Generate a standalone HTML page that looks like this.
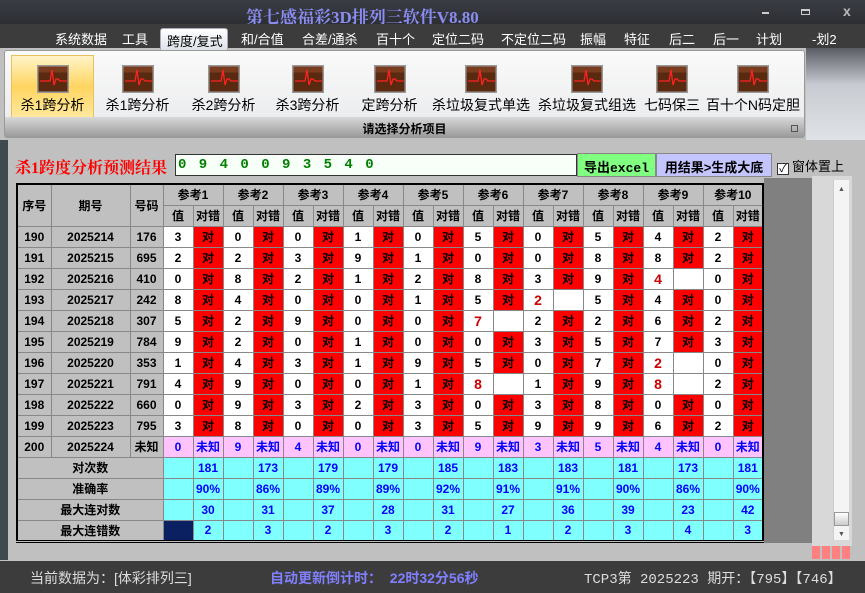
<!DOCTYPE html><html><head><meta charset="utf-8"><style>
*{margin:0;padding:0;box-sizing:border-box}
body{width:865px;height:593px;overflow:hidden;background:#c0c0c0;font-family:"Liberation Sans","Noto Sans CJK SC",sans-serif;position:relative}
.a{position:absolute}
#title{left:0;top:0;width:865px;height:24px;background:linear-gradient(#3a3d44,#2c2e33)}
#title span{position:absolute;left:246px;top:3px;color:#8a8cf0;font:bold 17px "Liberation Serif","Noto Serif CJK SC",serif}
#menu{left:0;top:24px;width:865px;height:24px;background:#3c3c3c;color:#fff;font-size:13px}
#menu span{position:absolute;top:5px}
#tab{left:160px;top:28px;width:68px;height:22px;background:linear-gradient(#fff,#dde2ea);border:1px solid #aab;border-bottom:none;border-radius:3px 3px 0 0;color:#000;font-size:13px;padding:2px 0 0 6px}
#rib{left:4px;top:50px;width:801px;height:88px;background:linear-gradient(#fafafa,#e8e9eb);border:1px solid #999;border-radius:3px}
#ribr{left:806px;top:48px;width:59px;height:92px;background:linear-gradient(#5a5d63,#c8ccd2 40%,#dfe2e6)}
#ribb{left:5px;top:117px;width:799px;height:20px;background:linear-gradient(#d8d8d8,#9a9a9a);text-align:center;font:bold 12px "Liberation Sans","Noto Sans CJK SC",sans-serif;padding-top:3px}
.btn{position:absolute;top:55px;height:62px;text-align:center;font-size:14px}
.btn svg{display:block;margin:10px auto 2px}
#sel{left:11px;top:55px;width:83px;height:64px;background:linear-gradient(#fff3c8,#ffd560 50%,#ffe9a0);border:1px solid #e8c060}
#main{left:8px;top:143px;width:857px;height:418px;background:#c0c0c0}
#ls{left:0;top:140px;width:8px;height:420px;background:#3f4a4f}
#hd{left:15px;top:155px;color:#f00;font:bold 16px "Liberation Serif","Noto Serif CJK SC",serif}
#inp{left:175px;top:154px;width:402px;height:22px;background:#f8fff8;border:1px solid #333;color:#008000;font:bold 14px "Liberation Mono",monospace;padding:2px 0 0 2px;letter-spacing:2px}
#b1{left:577px;top:153px;width:79px;height:24px;background:#80ff80;border:1px solid #888;font:bold 13px "Liberation Mono","Noto Sans CJK SC",monospace;padding-top:3px;text-align:center}
#b2{left:656px;top:153px;width:116px;height:24px;background:#c4c4ff;border:1px solid #888;font:bold 13px "Liberation Sans","Noto Sans CJK SC",sans-serif;padding-top:3px;text-align:center}
#cb{left:777px;top:156px;font-size:13px}
#cb i{display:inline-block;width:12px;height:12px;border:1px solid #333;background:#fff;font-style:normal;font-size:11px;line-height:10px;text-align:center;vertical-align:-1px;margin-right:3px}
#gray{left:764px;top:178px;width:48px;height:365px;background:#808080}
#sb{left:812px;top:176px;width:40px;height:370px;background:#d8d8d8}
#sbt{left:833px;top:180px;width:16px;height:360px;background:#f4f4f4;border-left:1px solid #ccc}
#thumb{left:834px;top:512px;width:15px;height:14px;background:linear-gradient(#fff,#ccc);border:1px solid #999}
table{position:absolute;left:16px;top:183px;border-collapse:collapse;font:bold 12px "Liberation Sans","Noto Sans CJK SC",sans-serif;border:2px solid #000;border-bottom:3px double #000}
td{border:1px solid #888;text-align:center;height:21px;padding:0;background:#fff}
.h{background:#c0c0c0}
.r{background:#f00}
.m{color:#c00;font-size:14px}
.p{background:#ffc4ff;color:#00f}
.c{background:#80ffff;color:#00f}
.n{background:#0a2060}
#st{left:0;top:561px;width:865px;height:32px;background:#3c3c3c;font-size:14px}
#red{left:812px;top:546px;width:40px;height:13px;background:repeating-linear-gradient(90deg,#ff8080 0 8px,#c0c0c0 8px 10px)}
</style></head><body>
<div id="title" class="a"><span>第七感福彩3D排列三软件V8.80</span>
<div class="a" style="left:762px;top:12px;width:7px;height:2px;background:#ccc"></div>
<div class="a" style="left:801px;top:9px;width:9px;height:6px;border:1px solid #ccc;border-top-width:2px"></div>
<div class="a" style="left:843px;top:3px;color:#bbb;font-size:14px;font-weight:bold">x</div></div>
<div id="menu" class="a">
<span style="left:55px">系统数据</span><span style="left:122px">工具</span><span style="left:241px">和/合值</span><span style="left:302px">合差/通杀</span><span style="left:376px">百十个</span><span style="left:432px">定位二码</span><span style="left:501px">不定位二码</span><span style="left:580px">振幅</span><span style="left:624px">特征</span><span style="left:669px">后二</span><span style="left:713px">后一</span><span style="left:756px">计划</span><span style="left:812px">-划2</span></div>
<div id="tab" class="a">跨度/复式</div>
<div id="ribr" class="a"></div>
<div id="rib" class="a"></div>
<div id="sel" class="a"></div>
<div id="ribb" class="a">请选择分析项目</div>
<div class="a" style="left:791px;top:125px;width:7px;height:7px;border:1px solid #555"></div>
<svg width="0" height="0" style="position:absolute"><defs><g id="ic"><rect x="0" y="0" width="32" height="28" fill="#999"/><rect x="1.5" y="1.5" width="29" height="25" fill="#5a2a10"/><rect x="1.5" y="1.5" width="29" height="6" fill="#7a3c1e"/><path d="M3 16H13L15 5L17 20L19 14H21L23 16H30" stroke="#f22" stroke-width="1.3" fill="none"/></g></defs></svg>
<div class="btn" style="left:11px;width:83px"><svg width="32" height="28"><use href="#ic"/></svg>杀1跨分析</div>
<div class="btn" style="left:100px;width:75px"><svg width="32" height="28"><use href="#ic"/></svg>杀1跨分析</div>
<div class="btn" style="left:186px;width:75px"><svg width="32" height="28"><use href="#ic"/></svg>杀2跨分析</div>
<div class="btn" style="left:270px;width:75px"><svg width="32" height="28"><use href="#ic"/></svg>杀3跨分析</div>
<div class="btn" style="left:352px;width:75px"><svg width="32" height="28"><use href="#ic"/></svg>定跨分析</div>
<div class="btn" style="left:429px;width:104px"><svg width="32" height="28"><use href="#ic"/></svg>杀垃圾复式单选</div>
<div class="btn" style="left:535px;width:104px"><svg width="32" height="28"><use href="#ic"/></svg>杀垃圾复式组选</div>
<div class="btn" style="left:640px;width:64px"><svg width="32" height="28"><use href="#ic"/></svg>七码保三</div>
<div class="btn" style="left:705px;width:96px"><svg width="32" height="28"><use href="#ic"/></svg>百十个N码定胆</div>
<div id="ls" class="a"></div>
<div id="main" class="a"></div>
<div id="hd" class="a">杀1跨度分析预测结果</div>
<div id="inp" class="a">0 9 4 0 0 9 3 5 4 0</div>
<div id="b1" class="a">导出excel</div>
<div id="b2" class="a">用结果&gt;生成大底</div>
<div id="cb" class="a"><i>✓</i>窗体置上</div>
<div id="gray" class="a"></div>
<div id="sb" class="a"></div><div id="sbt" class="a"></div><div id="thumb" class="a"></div>
<div class="a" style="left:838px;top:186px;font-size:7px;color:#555">▲</div>
<div class="a" style="left:838px;top:531px;font-size:7px;color:#555">▼</div>
<div id="red" class="a"></div>
<table>
<colgroup><col style="width:34px"><col style="width:79px"><col style="width:33px"><col span="20" style="width:30px"></colgroup>
<tr><td class="h" rowspan="2">序号</td><td class="h" rowspan="2">期号</td><td class="h" rowspan="2">号码</td><td class="h" colspan="2">参考1</td><td class="h" colspan="2">参考2</td><td class="h" colspan="2">参考3</td><td class="h" colspan="2">参考4</td><td class="h" colspan="2">参考5</td><td class="h" colspan="2">参考6</td><td class="h" colspan="2">参考7</td><td class="h" colspan="2">参考8</td><td class="h" colspan="2">参考9</td><td class="h" colspan="2">参考10</td></tr>
<tr><td class="h">值</td><td class="h">对错</td><td class="h">值</td><td class="h">对错</td><td class="h">值</td><td class="h">对错</td><td class="h">值</td><td class="h">对错</td><td class="h">值</td><td class="h">对错</td><td class="h">值</td><td class="h">对错</td><td class="h">值</td><td class="h">对错</td><td class="h">值</td><td class="h">对错</td><td class="h">值</td><td class="h">对错</td><td class="h">值</td><td class="h">对错</td></tr>
<tr><td class="h">190</td><td class="h">2025214</td><td class="h">176</td><td>3</td><td class="r">对</td><td>0</td><td class="r">对</td><td>0</td><td class="r">对</td><td>1</td><td class="r">对</td><td>0</td><td class="r">对</td><td>5</td><td class="r">对</td><td>0</td><td class="r">对</td><td>5</td><td class="r">对</td><td>4</td><td class="r">对</td><td>2</td><td class="r">对</td></tr>
<tr><td class="h">191</td><td class="h">2025215</td><td class="h">695</td><td>2</td><td class="r">对</td><td>2</td><td class="r">对</td><td>3</td><td class="r">对</td><td>9</td><td class="r">对</td><td>1</td><td class="r">对</td><td>0</td><td class="r">对</td><td>0</td><td class="r">对</td><td>8</td><td class="r">对</td><td>8</td><td class="r">对</td><td>2</td><td class="r">对</td></tr>
<tr><td class="h">192</td><td class="h">2025216</td><td class="h">410</td><td>0</td><td class="r">对</td><td>8</td><td class="r">对</td><td>2</td><td class="r">对</td><td>1</td><td class="r">对</td><td>2</td><td class="r">对</td><td>8</td><td class="r">对</td><td>3</td><td class="r">对</td><td>9</td><td class="r">对</td><td class="m">4</td><td></td><td>0</td><td class="r">对</td></tr>
<tr><td class="h">193</td><td class="h">2025217</td><td class="h">242</td><td>8</td><td class="r">对</td><td>4</td><td class="r">对</td><td>0</td><td class="r">对</td><td>0</td><td class="r">对</td><td>1</td><td class="r">对</td><td>5</td><td class="r">对</td><td class="m">2</td><td></td><td>5</td><td class="r">对</td><td>4</td><td class="r">对</td><td>0</td><td class="r">对</td></tr>
<tr><td class="h">194</td><td class="h">2025218</td><td class="h">307</td><td>5</td><td class="r">对</td><td>2</td><td class="r">对</td><td>9</td><td class="r">对</td><td>0</td><td class="r">对</td><td>0</td><td class="r">对</td><td class="m">7</td><td></td><td>2</td><td class="r">对</td><td>2</td><td class="r">对</td><td>6</td><td class="r">对</td><td>2</td><td class="r">对</td></tr>
<tr><td class="h">195</td><td class="h">2025219</td><td class="h">784</td><td>9</td><td class="r">对</td><td>2</td><td class="r">对</td><td>0</td><td class="r">对</td><td>1</td><td class="r">对</td><td>0</td><td class="r">对</td><td>0</td><td class="r">对</td><td>3</td><td class="r">对</td><td>5</td><td class="r">对</td><td>7</td><td class="r">对</td><td>3</td><td class="r">对</td></tr>
<tr><td class="h">196</td><td class="h">2025220</td><td class="h">353</td><td>1</td><td class="r">对</td><td>4</td><td class="r">对</td><td>3</td><td class="r">对</td><td>1</td><td class="r">对</td><td>9</td><td class="r">对</td><td>5</td><td class="r">对</td><td>0</td><td class="r">对</td><td>7</td><td class="r">对</td><td class="m">2</td><td></td><td>0</td><td class="r">对</td></tr>
<tr><td class="h">197</td><td class="h">2025221</td><td class="h">791</td><td>4</td><td class="r">对</td><td>9</td><td class="r">对</td><td>0</td><td class="r">对</td><td>0</td><td class="r">对</td><td>1</td><td class="r">对</td><td class="m">8</td><td></td><td>1</td><td class="r">对</td><td>9</td><td class="r">对</td><td class="m">8</td><td></td><td>2</td><td class="r">对</td></tr>
<tr><td class="h">198</td><td class="h">2025222</td><td class="h">660</td><td>0</td><td class="r">对</td><td>9</td><td class="r">对</td><td>3</td><td class="r">对</td><td>2</td><td class="r">对</td><td>3</td><td class="r">对</td><td>0</td><td class="r">对</td><td>3</td><td class="r">对</td><td>8</td><td class="r">对</td><td>0</td><td class="r">对</td><td>0</td><td class="r">对</td></tr>
<tr><td class="h">199</td><td class="h">2025223</td><td class="h">795</td><td>3</td><td class="r">对</td><td>8</td><td class="r">对</td><td>0</td><td class="r">对</td><td>0</td><td class="r">对</td><td>3</td><td class="r">对</td><td>5</td><td class="r">对</td><td>9</td><td class="r">对</td><td>9</td><td class="r">对</td><td>6</td><td class="r">对</td><td>2</td><td class="r">对</td></tr>
<tr><td class="h">200</td><td class="h">2025224</td><td class="h">未知</td><td class="p">0</td><td class="p">未知</td><td class="p">9</td><td class="p">未知</td><td class="p">4</td><td class="p">未知</td><td class="p">0</td><td class="p">未知</td><td class="p">0</td><td class="p">未知</td><td class="p">9</td><td class="p">未知</td><td class="p">3</td><td class="p">未知</td><td class="p">5</td><td class="p">未知</td><td class="p">4</td><td class="p">未知</td><td class="p">0</td><td class="p">未知</td></tr>
<tr><td class="h" colspan="3">对次数</td><td class="c"></td><td class="c">181</td><td class="c"></td><td class="c">173</td><td class="c"></td><td class="c">179</td><td class="c"></td><td class="c">179</td><td class="c"></td><td class="c">185</td><td class="c"></td><td class="c">183</td><td class="c"></td><td class="c">183</td><td class="c"></td><td class="c">181</td><td class="c"></td><td class="c">173</td><td class="c"></td><td class="c">181</td></tr>
<tr><td class="h" colspan="3">准确率</td><td class="c"></td><td class="c">90%</td><td class="c"></td><td class="c">86%</td><td class="c"></td><td class="c">89%</td><td class="c"></td><td class="c">89%</td><td class="c"></td><td class="c">92%</td><td class="c"></td><td class="c">91%</td><td class="c"></td><td class="c">91%</td><td class="c"></td><td class="c">90%</td><td class="c"></td><td class="c">86%</td><td class="c"></td><td class="c">90%</td></tr>
<tr><td class="h" colspan="3">最大连对数</td><td class="c"></td><td class="c">30</td><td class="c"></td><td class="c">31</td><td class="c"></td><td class="c">37</td><td class="c"></td><td class="c">28</td><td class="c"></td><td class="c">31</td><td class="c"></td><td class="c">27</td><td class="c"></td><td class="c">36</td><td class="c"></td><td class="c">39</td><td class="c"></td><td class="c">23</td><td class="c"></td><td class="c">42</td></tr>
<tr><td class="h" colspan="3">最大连错数</td><td class="n"></td><td class="c">2</td><td class="c"></td><td class="c">3</td><td class="c"></td><td class="c">2</td><td class="c"></td><td class="c">3</td><td class="c"></td><td class="c">2</td><td class="c"></td><td class="c">1</td><td class="c"></td><td class="c">2</td><td class="c"></td><td class="c">3</td><td class="c"></td><td class="c">4</td><td class="c"></td><td class="c">3</td></tr>
</table>
<div id="st" class="a">
<span class="a" style="left:30px;top:7px;color:#ddd">当前数据为：[体彩排列三]</span>
<span class="a" style="left:270px;top:7px;color:#8080ff;font-weight:bold">自动更新倒计时：&nbsp; 22时32分56秒</span>
<span class="a" style="left:584px;top:7px;color:#ddd;font-family:'Liberation Mono','Noto Sans CJK SC',monospace;font-size:14px">TCP3第 2025223 期开：【795】【746】</span>
</div>
</body></html>
